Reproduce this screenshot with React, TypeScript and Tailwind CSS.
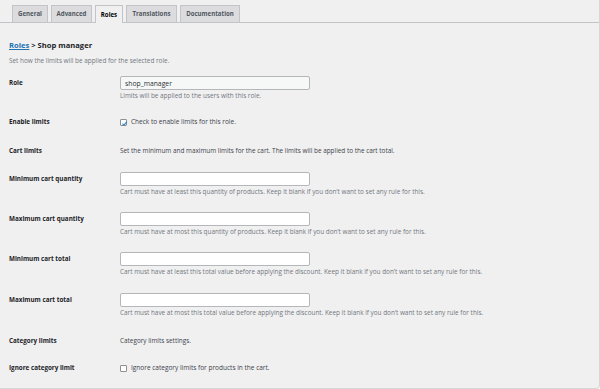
const tabs = [
  { name: 'General', width: 'w-[36px]' },
  { name: 'Advanced', width: 'w-[41px]' },
  { name: 'Roles', width: 'w-[28px]' },
  { name: 'Translations', width: 'w-[51px]' },
  { name: 'Documentation', width: 'w-[60px]' },
]

type FieldProps = {
  label: string
  description: string
  className?: string
}

const NumberField = ({ label, description, className }: FieldProps) => (
  <div className={`flex ${className ?? ''}`}>
    <div className="flex h-[14px] w-[111px] shrink-0 items-center text-[6.3px] font-bold text-[#1d2327]">{label}</div>
    <div>
      <input
        type="text"
        className="block h-[14px] w-[190px] rounded-[2px] border border-[#b4b6b9] bg-white px-[4px] text-[6.8px] outline-none"
      />
      <p className="mt-[2px] h-[8px] whitespace-nowrap text-[6.4px] leading-[8px] text-[#72777c]">{description}</p>
    </div>
  </div>
)

const Checkbox = ({ checked }: { checked?: boolean }) => (
  <span className="grid h-[7px] w-[7px] shrink-0 place-items-center rounded-[1px] border border-[#8c8f94] bg-white">
    {checked && (
      <svg viewBox="0 0 10 10" className="h-[7px] w-[7px]">
        <path d="M2 5.2 L4.2 7.4 L8.4 2.4" fill="none" stroke="#3582c4" strokeWidth="1.5" />
      </svg>
    )}
  </span>
)

export default function App() {
  return (
    <div className="h-[389px] w-[600px] overflow-hidden rounded-br-[4px] border-r border-b border-[#d6d6d6] bg-[#f0f0f1] [font-family:'Open_Sans',sans-serif]">
      <nav className="flex items-end gap-[3px] border-b border-[#c3c4c7] pl-[12px] pt-[5px]">
        {tabs.map((tab) =>
          tab.name === 'Roles' ? (
            <span
              key={tab.name}
              className={`-mb-px flex h-[18px] items-center justify-center border border-b-0 border-[#c3c4c7] bg-[#f0f0f1] text-[6.1px] font-bold text-[#000] ${tab.width}`}
            >
              {tab.name}
            </span>
          ) : (
            <span
              key={tab.name}
              className={`flex h-[17px] items-center justify-center border border-b-0 border-[#c3c4c7] bg-[#dcdcde] text-[6.1px] font-bold text-[#50575e] ${tab.width}`}
            >
              {tab.name}
            </span>
          ),
        )}
      </nav>

      <div className="px-[9px]">
        <h2 className="mt-[17px] h-[10px] text-[7.6px] font-bold leading-[10px] text-[#1d2327]">
          <a href="#" className="text-[#2271b1] underline">
            Roles
          </a>{' '}
          &gt; Shop manager
        </h2>
        <p className="mt-[7px] h-[8px] text-[6.4px] leading-[8px] text-[#72777c]">
          Set how the limits will be applied for the selected role.
        </p>

        <div className="mt-[11px] flex">
          <div className="flex h-[14px] w-[111px] shrink-0 items-center text-[6.3px] font-bold text-[#1d2327]">Role</div>
          <div>
            <input
              type="text"
              readOnly
              value="shop_manager"
              className="block h-[14px] w-[190px] rounded-[2px] border border-[#b4b6b9] bg-[#f6f7f7] px-[4px] text-[6.8px] text-[#2c3338] outline-none"
            />
            <p className="mt-[2px] h-[8px] text-[6.4px] leading-[8px] text-[#72777c]">
              Limits will be applied to the users with this role.
            </p>
          </div>
        </div>

        <div className="mt-[18px] flex h-[8px] items-center">
          <div className="w-[111px] shrink-0 text-[6.3px] font-bold text-[#1d2327]">Enable limits</div>
          <label className="flex items-center gap-[4px] text-[6.5px] text-[#3c434a]">
            <Checkbox checked />
            Check to enable limits for this role.
          </label>
        </div>

        <div className="mt-[21px] flex h-[8px] items-center">
          <div className="w-[111px] shrink-0 text-[6.3px] font-bold text-[#1d2327]">Cart limits</div>
          <p className="whitespace-nowrap text-[6.4px] text-[#3c434a]">
            Set the minimum and maximum limits for the cart. The limits will be applied to the cart total.
          </p>
        </div>

        <NumberField
          className="mt-[17px]"
          label="Minimum cart quantity"
          description="Cart must have at least this quantity of products. Keep it blank if you don’t want to set any rule for this."
        />
        <NumberField
          className="mt-[16px]"
          label="Maximum cart quantity"
          description="Cart must have at most this quantity of products. Keep it blank if you don’t want to set any rule for this."
        />
        <NumberField
          className="mt-[16px]"
          label="Minimum cart total"
          description="Cart must have at least this total value before applying the discount. Keep it blank if you don’t want to set any rule for this."
        />
        <NumberField
          className="mt-[17px]"
          label="Maximum cart total"
          description="Cart must have at most this total value before applying the discount. Keep it blank if you don’t want to set any rule for this."
        />

        <div className="mt-[20px] flex h-[8px] items-center">
          <div className="w-[111px] shrink-0 text-[6.3px] font-bold text-[#1d2327]">Category limits</div>
          <p className="text-[6.4px] text-[#3c434a]">Category limits settings.</p>
        </div>

        <div className="mt-[19px] flex h-[8px] items-center">
          <div className="w-[111px] shrink-0 text-[6.3px] font-bold text-[#1d2327]">Ignore category limit</div>
          <label className="flex items-center gap-[4px] text-[6.5px] text-[#3c434a]">
            <Checkbox />
            Ignore category limits for products in the cart.
          </label>
        </div>
      </div>
    </div>
  )
}
